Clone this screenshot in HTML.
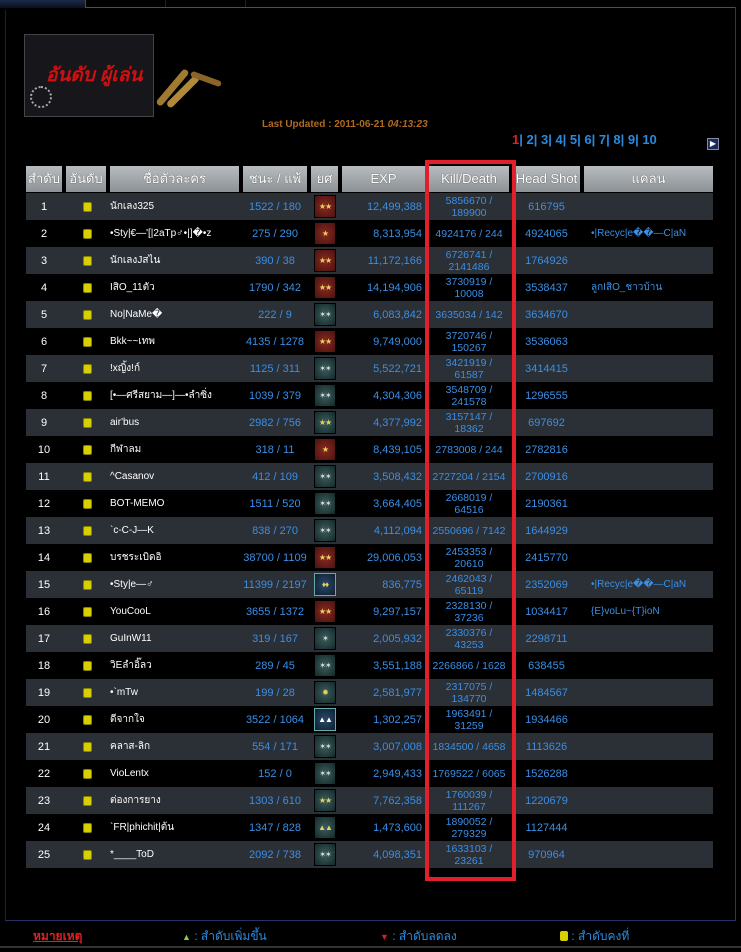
<!DOCTYPE html>
<html><head><meta charset="utf-8">
<style>
*{margin:0;padding:0;box-sizing:border-box}
body{width:741px;height:952px;background:#000;position:relative;overflow:hidden;font-family:"Liberation Sans","DejaVu Sans",sans-serif;font-size:11px;color:#fff}
.abs{position:absolute}
.hd{position:absolute;top:166px;height:26px;background:linear-gradient(#b8bcbf,#8d9296);color:#fff;font-size:13px;text-align:center;line-height:26px;text-shadow:0 0 1px #333}
.row{position:absolute;left:26px;width:687px;height:27px}
.g{background:#2b2f36}
.c{position:absolute;top:0;height:27px;display:flex;align-items:center;justify-content:center;text-align:center;line-height:12px}
.n{left:0;width:36px}
.y{left:57px;top:9px;width:9px;height:10px;background:#d8d000;border:1px solid #888400;border-radius:2px;position:absolute}
.nm{left:84px;width:130px;justify-content:flex-start;font-size:10px}
.w{left:217px;width:64px;color:#3a8fe6}
.r{left:288px;top:2px;width:22px;height:23px;position:absolute;border:1px solid #000;font-size:8px;color:#e8d060;display:flex;align-items:center;justify-content:center;letter-spacing:-1px}
.rr{background:radial-gradient(#8a2a20,#4a1210)}
.rt{background:radial-gradient(#3c5e5e,#142828);color:#ddd}
.rb{background:radial-gradient(#2a4a6a,#0e1e30);border-color:#6aa}
.e{left:316px;width:80px;justify-content:flex-end;color:#3a8fe6}
.k{left:403px;width:80px;color:#3a8fe6;font-size:10.5px}
.h{left:487px;width:67px;color:#3a8fe6}
.cl{left:565px;width:120px;justify-content:flex-start;color:#3a8fe6;font-size:10px}
</style></head><body>
<div class="abs" style="left:0;top:0;width:85px;height:8px;background:linear-gradient(#1c2a48,#0a0f1c)"></div>
<div class="abs" style="left:85px;top:0;width:1px;height:8px;background:#3a4a90"></div>
<div class="abs" style="left:165px;top:0;width:1px;height:7px;background:#222"></div>
<div class="abs" style="left:245px;top:0;width:1px;height:7px;background:#222"></div>
<div class="abs" style="left:85px;top:7px;width:651px;height:1px;background:#3a4aa0"></div>
<div class="abs" style="left:735px;top:7px;width:1px;height:914px;background:#2a3470"></div>
<div class="abs" style="left:5px;top:10px;width:1px;height:911px;background:#1a2040"></div>
<div class="abs" style="left:5px;top:920px;width:731px;height:1px;background:#2a3060"></div>
<div class="abs" style="left:0;top:946px;width:741px;height:2px;background:#333"></div>
<div class="abs" style="left:24px;top:34px;width:130px;height:83px;background:#17161a;border:1px solid #444"></div>
<div class="abs" style="left:46px;top:60px;font-size:19px;font-weight:bold;font-style:italic;color:#d01010">อันดับ ผู้เล่น</div>
<div class="abs" style="left:30px;top:86px;width:22px;height:22px;border:2px dotted #aaa;border-radius:50%"></div>
<div class="abs" style="left:150px;top:84px;width:45px;height:7px;background:#a07a30;transform:rotate(-50deg);border-radius:4px"></div>
<div class="abs" style="left:162px;top:88px;width:42px;height:7px;background:#b08a38;transform:rotate(-45deg);border-radius:4px"></div>
<div class="abs" style="left:190px;top:76px;width:32px;height:6px;background:#8a6428;transform:rotate(20deg);border-radius:4px"></div>
<div class="abs" style="left:262px;top:119px;font-size:10px;font-weight:bold;color:#b06a20">Last Updated : 2011-06-21 <i>04:13:23</i></div>
<div class="abs" style="left:512px;top:132px;font-size:13px;font-weight:bold;color:#2a8ae0"><span style="color:#e02020">1</span>| 2| 3| 4| 5| 6| 7| 8| 9| 10</div>
<div class="abs" style="left:707px;top:138px;width:12px;height:12px;background:#1a2860;border:1px solid #889;color:#fff;font-size:8px;line-height:10px;text-align:center">▶</div>

<div class="hd" style="left:26px;width:36px">สำดับ</div>
<div class="hd" style="left:66px;width:40px">อันดับ</div>
<div class="hd" style="left:110px;width:129px">ชื่อตัวละคร</div>
<div class="hd" style="left:243px;width:64px">ชนะ / แพ้</div>
<div class="hd" style="left:311px;width:27px">ยศ</div>
<div class="hd" style="left:342px;width:83px">EXP</div>
<div class="hd" style="left:429px;width:80px">Kill/Death</div>
<div class="hd" style="left:513px;width:67px">Head Shot</div>
<div class="hd" style="left:584px;width:129px">แคลน</div>

<div class="row g" style="top:193px"><div class="c n">1</div><div class="y"></div><div class="c nm">นักเลง325</div><div class="c w">1522 / 180</div><div class="r rr">★★</div><div class="c e">12,499,388</div><div class="c k">5856670 /<br>189900</div><div class="c h">616795</div><div class="c cl"></div></div>
<div class="row" style="top:220px"><div class="c n">2</div><div class="y"></div><div class="c nm">•Sty|€—'[|2aTp♂•|]�•z</div><div class="c w">275 / 290</div><div class="r rr">★</div><div class="c e">8,313,954</div><div class="c k">4924176 / 244</div><div class="c h">4924065</div><div class="c cl">•|Recyc|e��—C|aN</div></div>
<div class="row g" style="top:247px"><div class="c n">3</div><div class="y"></div><div class="c nm">นักเลงJสไน</div><div class="c w">390 / 38</div><div class="r rr">★★</div><div class="c e">11,172,166</div><div class="c k">6726741 /<br>2141486</div><div class="c h">1764926</div><div class="c cl"></div></div>
<div class="row" style="top:274px"><div class="c n">4</div><div class="y"></div><div class="c nm">IสิO_11ตัว</div><div class="c w">1790 / 342</div><div class="r rr">★★</div><div class="c e">14,194,906</div><div class="c k">3730919 /<br>10008</div><div class="c h">3538437</div><div class="c cl">ลูกIสิO_ชาวบ้าน</div></div>
<div class="row g" style="top:301px"><div class="c n">5</div><div class="y"></div><div class="c nm">No|NaMe�</div><div class="c w">222 / 9</div><div class="r rt">✶✶</div><div class="c e">6,083,842</div><div class="c k">3635034 / 142</div><div class="c h">3634670</div><div class="c cl"></div></div>
<div class="row" style="top:328px"><div class="c n">6</div><div class="y"></div><div class="c nm">Bkk~~เทพ</div><div class="c w">4135 / 1278</div><div class="r rr">★★</div><div class="c e">9,749,000</div><div class="c k">3720746 /<br>150267</div><div class="c h">3536063</div><div class="c cl"></div></div>
<div class="row g" style="top:355px"><div class="c n">7</div><div class="y"></div><div class="c nm">!xญิ้ง!ก์</div><div class="c w">1125 / 311</div><div class="r rt">✶✶</div><div class="c e">5,522,721</div><div class="c k">3421919 /<br>61587</div><div class="c h">3414415</div><div class="c cl"></div></div>
<div class="row" style="top:382px"><div class="c n">8</div><div class="y"></div><div class="c nm">[•—ศรีสยาม—]—•ลำซิ่ง</div><div class="c w">1039 / 379</div><div class="r rt">✶✶</div><div class="c e">4,304,306</div><div class="c k">3548709 /<br>241578</div><div class="c h">1296555</div><div class="c cl"></div></div>
<div class="row g" style="top:409px"><div class="c n">9</div><div class="y"></div><div class="c nm">air'bus</div><div class="c w">2982 / 756</div><div class="r rt" style="color:#e8d060">★★</div><div class="c e">4,377,992</div><div class="c k">3157147 /<br>18362</div><div class="c h">697692</div><div class="c cl"></div></div>
<div class="row" style="top:436px"><div class="c n">10</div><div class="y"></div><div class="c nm">กีฬาลม</div><div class="c w">318 / 11</div><div class="r rr">★</div><div class="c e">8,439,105</div><div class="c k">2783008 / 244</div><div class="c h">2782816</div><div class="c cl"></div></div>
<div class="row g" style="top:463px"><div class="c n">11</div><div class="y"></div><div class="c nm">^Casanov</div><div class="c w">412 / 109</div><div class="r rt">✶✶</div><div class="c e">3,508,432</div><div class="c k">2727204 / 2154</div><div class="c h">2700916</div><div class="c cl"></div></div>
<div class="row" style="top:490px"><div class="c n">12</div><div class="y"></div><div class="c nm">BOT-MEMO</div><div class="c w">1511 / 520</div><div class="r rt">✶✶</div><div class="c e">3,664,405</div><div class="c k">2668019 /<br>64516</div><div class="c h">2190361</div><div class="c cl"></div></div>
<div class="row g" style="top:517px"><div class="c n">13</div><div class="y"></div><div class="c nm">`c-C-J—K</div><div class="c w">838 / 270</div><div class="r rt">✶✶</div><div class="c e">4,112,094</div><div class="c k">2550696 / 7142</div><div class="c h">1644929</div><div class="c cl"></div></div>
<div class="row" style="top:544px"><div class="c n">14</div><div class="y"></div><div class="c nm">บรชระเบิดอิ</div><div class="c w">38700 / 1109</div><div class="r rr">★★</div><div class="c e">29,006,053</div><div class="c k">2453353 /<br>20610</div><div class="c h">2415770</div><div class="c cl"></div></div>
<div class="row g" style="top:571px"><div class="c n">15</div><div class="y"></div><div class="c nm">•Sty|e—♂</div><div class="c w">11399 / 2197</div><div class="r rb">♦♦</div><div class="c e">836,775</div><div class="c k">2462043 /<br>65119</div><div class="c h">2352069</div><div class="c cl">•|Recyc|e��—C|aN</div></div>
<div class="row" style="top:598px"><div class="c n">16</div><div class="y"></div><div class="c nm">YouCooL</div><div class="c w">3655 / 1372</div><div class="r rr">★★</div><div class="c e">9,297,157</div><div class="c k">2328130 /<br>37236</div><div class="c h">1034417</div><div class="c cl">{E}voLu~{T}ioN</div></div>
<div class="row g" style="top:625px"><div class="c n">17</div><div class="y"></div><div class="c nm">GuInW11</div><div class="c w">319 / 167</div><div class="r rt">✶</div><div class="c e">2,005,932</div><div class="c k">2330376 /<br>43253</div><div class="c h">2298711</div><div class="c cl"></div></div>
<div class="row" style="top:652px"><div class="c n">18</div><div class="y"></div><div class="c nm">วิEลำอิ๊ลว</div><div class="c w">289 / 45</div><div class="r rt">✶✶</div><div class="c e">3,551,188</div><div class="c k">2266866 / 1628</div><div class="c h">638455</div><div class="c cl"></div></div>
<div class="row g" style="top:679px"><div class="c n">19</div><div class="y"></div><div class="c nm">•`mTw</div><div class="c w">199 / 28</div><div class="r rt" style="color:#e8d060">✹</div><div class="c e">2,581,977</div><div class="c k">2317075 /<br>134770</div><div class="c h">1484567</div><div class="c cl"></div></div>
<div class="row" style="top:706px"><div class="c n">20</div><div class="y"></div><div class="c nm">ดีจากใจ</div><div class="c w">3522 / 1064</div><div class="r rb" style="color:#fff">▲▲</div><div class="c e">1,302,257</div><div class="c k">1963491 /<br>31259</div><div class="c h">1934466</div><div class="c cl"></div></div>
<div class="row g" style="top:733px"><div class="c n">21</div><div class="y"></div><div class="c nm">คลาส-ลิก</div><div class="c w">554 / 171</div><div class="r rt">✶✶</div><div class="c e">3,007,008</div><div class="c k">1834500 / 4658</div><div class="c h">1113626</div><div class="c cl"></div></div>
<div class="row" style="top:760px"><div class="c n">22</div><div class="y"></div><div class="c nm">VioLentx</div><div class="c w">152 / 0</div><div class="r rt">✶✶</div><div class="c e">2,949,433</div><div class="c k">1769522 / 6065</div><div class="c h">1526288</div><div class="c cl"></div></div>
<div class="row g" style="top:787px"><div class="c n">23</div><div class="y"></div><div class="c nm">ต่องการยาง</div><div class="c w">1303 / 610</div><div class="r rt" style="color:#e8d060">★★</div><div class="c e">7,762,358</div><div class="c k">1760039 /<br>111267</div><div class="c h">1220679</div><div class="c cl"></div></div>
<div class="row" style="top:814px"><div class="c n">24</div><div class="y"></div><div class="c nm">`FR|phichit|ต้น</div><div class="c w">1347 / 828</div><div class="r rt" style="color:#e8d060">▲▲</div><div class="c e">1,473,600</div><div class="c k">1890052 /<br>279329</div><div class="c h">1127444</div><div class="c cl"></div></div>
<div class="row g" style="top:841px"><div class="c n">25</div><div class="y"></div><div class="c nm">*____ToD</div><div class="c w">2092 / 738</div><div class="r rt">✶✶</div><div class="c e">4,098,351</div><div class="c k">1633103 /<br>23261</div><div class="c h">970964</div><div class="c cl"></div></div>

<div class="abs" style="left:425px;top:160px;width:91px;height:721px;border:4px solid #e0202a"></div>

<div class="abs" style="left:33px;top:927px;font-size:12px;font-weight:bold;color:#e02020;text-decoration:underline">หมายเหตุ</div>
<div class="abs" style="left:182px;top:927px;font-size:12px;color:#2a8ae0"><span style="color:#8c4;font-size:9px">▲</span> : สำดับเพิ่มขึ้น</div>
<div class="abs" style="left:380px;top:927px;font-size:12px;color:#2a8ae0"><span style="color:#d02020;font-size:9px">▼</span> : สำดับลดลง</div>
<div class="abs" style="left:560px;top:927px;font-size:12px;color:#2a8ae0"><span style="display:inline-block;width:8px;height:10px;background:#d8d000;border-radius:2px;vertical-align:-1px"></span> : สำดับคงที่</div>
</body></html>
